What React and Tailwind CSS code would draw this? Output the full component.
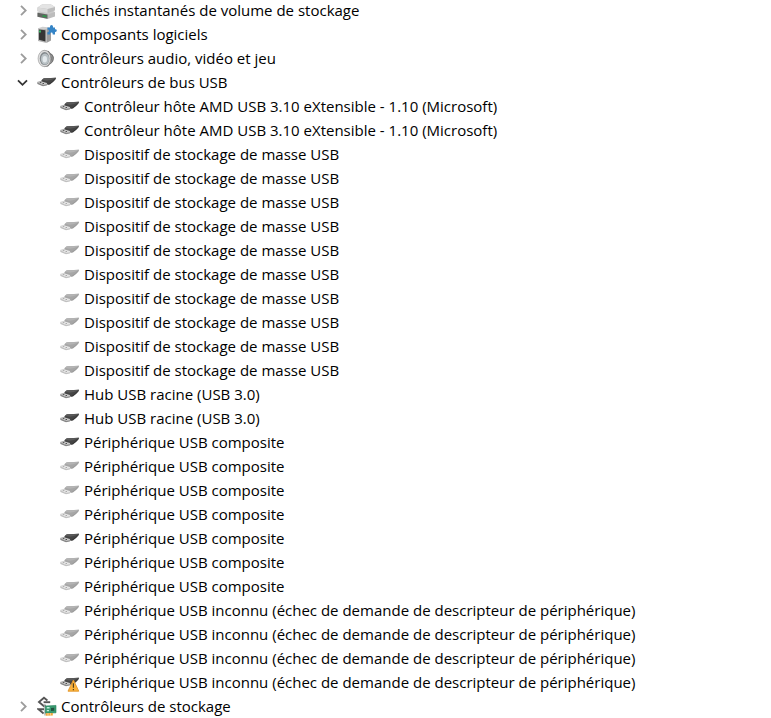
import React, { useState } from 'react';

const UsbIcon = ({ hidden, warning }) => {
  const body = hidden ? "#a6a6a6" : "#444444";
  const top = hidden ? "#b4b4b4" : "#5a5a5a";
  const edge = hidden ? "#989898" : "#303030";
  const metal = hidden ? "#e6e6e6" : "#c9c9c9";
  const shade = hidden ? "#c0c0c0" : "#858585";
  const slot = hidden ? "#a8a8a8" : "#4a4a4a";

  return (
    <svg viewBox="0 0 20 20" className="h-5 w-5 shrink-0" aria-hidden="true">
      <path d="M14 6.8 L19 6.2" stroke={top} strokeWidth="1.4" fill="none" />
      <path d="M0.3 10.2 L5.2 9 L11 10.8 L10 13.2 L6 14 L0.5 11.8 Z" fill={metal} />
      <path d="M0.3 10.6 L0.5 12 L6 14.2 L10 13.3 V12.3 L6 13 Z" fill={shade} />
      <path d="M0.3 10.3 L5.2 9" stroke={shade} strokeWidth="0.6" />
      <path d="M2.8 10.8 L4.4 10.4 M5.4 11.8 L7 11.4" stroke={slot} strokeWidth="1" />
      <path d="M4.4 8.2 L6.6 6.3 L16.8 5.9 L19 6.8 L16.6 9.6 L13 12.4 L10.4 12.8 L9.8 11 L4.8 9.4 Z" fill={body} />
      <path d="M5.2 8 L7 6.4 L16.8 5.9 L17.8 6.5 L14 8 L9.8 8.8 Z" fill={top} />
      <path d="M11.4 12.4 L15.8 9.6 L17.8 7.4" stroke={edge} strokeWidth="0.7" fill="none" />
      {warning && (
        <>
          <path d="M13.4 8 L18.8 19.2 H8 Z" fill="#fbb33c" stroke="#e3962a" strokeWidth="0.9" strokeLinejoin="round" />
          <path d="M13.4 11.2 V15.8 M13.4 16.9 V18.2" stroke="#54401c" strokeWidth="1.2" />
        </>
      )}
    </svg>
  );
};

const VolumeIcon = () => (
  <svg viewBox="0 0 20 20" className="h-5 w-5 shrink-0" aria-hidden="true">
    <path d="M0.5 12.8 L4.5 10.5 H14 L18 12 V16.4 L10.5 19 L0.5 16.8 Z" fill="#bdbdbd" />
    <path d="M0.5 12.8 L4.5 10.5 H14 L18 12 L10.5 14.4 Z" fill="#c9c9c9" />
    <path d="M0.5 12.8 L10.5 14.6 V18.8 L0.5 16.8 Z" fill="#626562" />
    <path d="M5.5 15.8 L9.5 16.6" stroke="#2a9c49" strokeWidth="1.5" />
    <path d="M0.5 7.6 L5 4.4 H14 L18 7 V10.6 L10.5 12.9 L0.5 11.2 Z" fill="#bcbcbc" />
    <path d="M0.5 7.6 L5 4.4 H14 L18 7 L10.5 9 Z" fill="#e4e4e4" />
    <path d="M0.5 7.6 L10.5 9 V12.9 L0.5 11.2 Z" fill="#dadada" />
  </svg>
);

const SoftwareIcon = () => (
  <svg viewBox="0 0 20 20" className="h-5 w-5 shrink-0" aria-hidden="true">
    <path d="M1 4.2 L5.5 2.8 L13.8 3.6 L9.6 5 Z" fill="#cfcfcf" />
    <path d="M9.4 5 L14 3.6 V16.4 L9.4 19 Z" fill="#9d9d9d" />
    <path d="M1 4.2 L9.4 5 V19 L1 17 Z" fill="#b5b5b5" />
    <path d="M2 5.6 L8.4 6.3 V17.4 L2 15.8 Z" fill="#353535" />
    <path d="M3 6.4 V8.4" stroke="#37c067" strokeWidth="1.8" />
    <path d="M10.4 3.4 H13 V2.6 A1.5 1.5 0 0 1 16 2.6 V3.4 H18 V5.2 H18.4 A1.4 1.4 0 0 1 18.4 8 H18 V10.4 H15.7 V9.9 A1.3 1.3 0 0 0 13.1 9.9 V10.4 H10.4 V8.2 A1.5 1.5 0 0 0 10.4 5.2 Z" fill="#3584c6" />
  </svg>
);

const SpeakerIcon = () => (
  <svg viewBox="0 0 20 20" className="h-5 w-5 shrink-0" aria-hidden="true">
    <path d="M6.5 2 L11.6 3 Q13.4 5.6 15.4 6.6 Q17 8.4 16.8 11 Q16.6 13.6 14.8 15 Q12.6 16.4 11 18.4 L7 19 Z" fill="#6b6b6b" />
    <path d="M13.6 6.6 Q15.4 8.6 15.2 11 Q15 13.4 13.4 15" fill="none" stroke="#929292" strokeWidth="1.2" />
    <ellipse cx="7.4" cy="10.5" rx="6.3" ry="8.2" fill="#dcdcdc" stroke="#a0a0a0" strokeWidth="0.7" />
    <ellipse cx="7.6" cy="10.6" rx="4.8" ry="6.5" fill="#83898c" />
    <ellipse cx="8" cy="11" rx="4.1" ry="5.6" fill="#b8c0c4" />
    <ellipse cx="7.8" cy="11.2" rx="2.2" ry="3.2" fill="#e3e9ec" />
  </svg>
);

const StorageIcon = () => (
  <svg viewBox="0 0 20 20" className="h-5 w-5 shrink-0" aria-hidden="true">
    <path d="M10.4 4.4 L7 1.8 L2 6 L7 10.2 L8.6 9" fill="none" stroke="#555555" strokeWidth="1.9" />
    <path d="M6.6 6.2 H13.2" stroke="#555555" strokeWidth="1.9" />
    <path d="M7 13.2 H1.4 L6.6 17.6" fill="none" stroke="#555555" strokeWidth="1.9" />
    <path d="M6.8 9.8 H8 V19.6" fill="none" stroke="#a7aeab" strokeWidth="1.3" />
    <path d="M8.4 10 L19 9.4 V16.8 L8.4 17.2 Z" fill="#399a70" stroke="#22825a" strokeWidth="0.6" />
    <path d="M9.8 11.8 H12.6 M9.8 14.6 H12" stroke="#bdeed8" strokeWidth="1.4" />
    <path d="M14 12 L17.2 11.8 V14.8 L14 15 Z" fill="#22503f" />
    <path d="M8.8 17.3 L15.8 17 V19.4 L8.8 19.7 Z" fill="#f0a536" />
    <path d="M11 17.2 V19.6 M13.4 17.2 V19.5" stroke="#ffffff" strokeWidth="0.5" />
  </svg>
);

const HOST = "Contrôleur hôte AMD USB 3.10 eXtensible - 1.10 (Microsoft)";
const MASS = "Dispositif de stockage de masse USB";
const HUB = "Hub USB racine (USB 3.0)";
const COMPOSITE = "Périphérique USB composite";
const UNKNOWN = "Périphérique USB inconnu (échec de demande de descripteur de périphérique)";

// hidden devices are not currently plugged in
const usbDevices = [
  { name: HOST },
  { name: HOST },
  ...Array.from({ length: 10 }, () => ({ name: MASS, hidden: true })),
  { name: HUB },
  { name: HUB },
  { name: COMPOSITE },
  { name: COMPOSITE, hidden: true },
  { name: COMPOSITE, hidden: true },
  { name: COMPOSITE, hidden: true },
  { name: COMPOSITE },
  { name: COMPOSITE, hidden: true },
  { name: COMPOSITE, hidden: true },
  { name: UNKNOWN, hidden: true },
  { name: UNKNOWN, hidden: true },
  { name: UNKNOWN, hidden: true },
  { name: UNKNOWN, warning: true },
];

const categories = [
  { name: "Clichés instantanés de volume de stockage", Icon: VolumeIcon, devices: [] },
  { name: "Composants logiciels", Icon: SoftwareIcon, devices: [] },
  { name: "Contrôleurs audio, vidéo et jeu", Icon: SpeakerIcon, devices: [] },
  { name: "Contrôleurs de bus USB", Icon: UsbIcon, devices: usbDevices },
  { name: "Contrôleurs de stockage", Icon: StorageIcon, devices: [] },
];

const Category = ({ name, Icon, devices }) => {
  const [open, setOpen] = useState(devices.length > 0);

  return (
    <li>
      <button
        type="button"
        aria-expanded={open}
        onClick={() => setOpen(!open)}
        className="flex h-6 w-full items-center gap-1 pl-[15px] text-left"
      >
        <svg viewBox="0 0 16 16" className="mr-0.5 h-4 w-4 shrink-0" fill="none" strokeWidth="1.8" aria-hidden="true">
          {open
            ? <path d="M3 6.3 L7.5 10.8 L12 6.3" stroke="#333333" />
            : <path d="M6 3.8 L10.7 8.5 L6 13.2" stroke="#9c9c9c" />}
        </svg>
        <Icon />
        <span>{name}</span>
      </button>
      {open && devices.length > 0 && (
        <ul>
          {devices.map((device, index) => (
            <li key={index} className="flex h-6 items-center gap-1 pl-[60px]">
              <UsbIcon hidden={device.hidden} warning={device.warning} />
              <span>{device.name}</span>
            </li>
          ))}
        </ul>
      )}
    </li>
  );
};

const App = () => {
  return (
    <main className="min-h-screen overflow-hidden bg-white font-['Open_Sans','Noto_Sans',sans-serif] text-[15px] leading-6 whitespace-nowrap text-black">
      <ul className="-mt-0.5">
        {categories.map((category) => (
          <Category key={category.name} {...category} />
        ))}
      </ul>
    </main>
  );
};

export default App;
